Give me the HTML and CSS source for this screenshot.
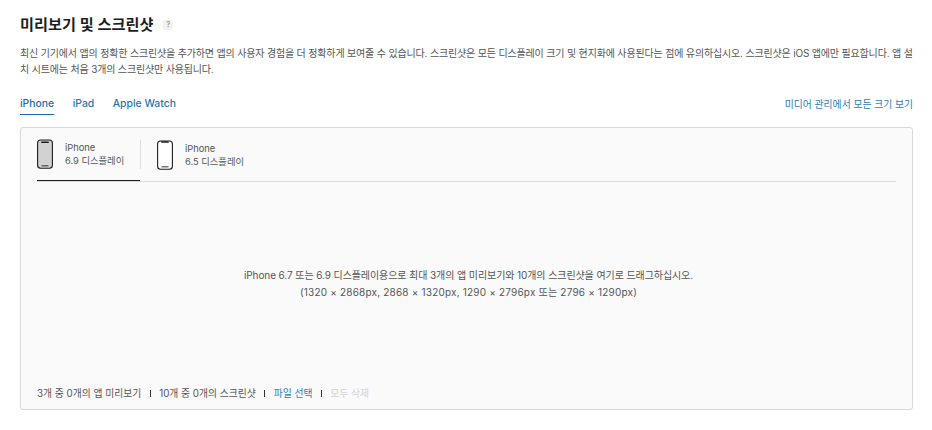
FILE: index.html
```html
<!DOCTYPE html>
<html lang="ko">
<head>
    <meta charset="UTF-8">
    <meta name="viewport" content="width=device-width, initial-scale=1.0">
    <title>미리보기 및 스크린샷</title>
    <link rel="stylesheet" href="styles.css">
</head>
<body>
    <div class="container">
        <div class="title-row">
            <h1>미리보기 및 스크린샷</h1>
            <span class="help">?</span>
        </div>
        <p class="intro">최신 기기에서 앱의 정확한 스크린샷을 추가하면 앱의 사용자 경험을 더 정확하게 보여줄 수 있습니다. 스크린샷은 모든 디스플레이 크기 및 현지화에 사용된다는 점에 유의하십시오. 스크린샷은 iOS 앱에만 필요합니다. 앱 설치 시트에는 처음 3개의 스크린샷만 사용됩니다.</p>

        <div class="tabs-row">
            <nav class="tabs">
                <a class="tab active">iPhone</a>
                <a class="tab">iPad</a>
                <a class="tab">Apple Watch</a>
            </nav>
            <a class="media-link">미디어 관리에서 모든 크기 보기</a>
        </div>

        <section class="panel">
            <div class="devices">
                <div class="device active">
                    <svg class="phone" width="16" height="30" viewBox="0 0 16 30">
                        <rect x="0.6" y="1" width="14.8" height="28.2" rx="3" fill="#d2d2d2" stroke="#1d1d1f" stroke-width="1.1"/>
                        <rect x="4" y="2.6" width="8" height="1.5" rx="0.75" fill="#1d1d1f"/>
                        <rect x="4.5" y="26.4" width="7" height="0.9" fill="#1d1d1f"/>
                    </svg>
                    <div class="device-text">
                        <span>iPhone</span>
                        <span>6.9 디스플레이</span>
                    </div>
                </div>
                <div class="device">
                    <svg class="phone" width="16" height="30" viewBox="0 0 16 30">
                        <rect x="0.6" y="1" width="14.8" height="28.2" rx="3" fill="#fff" stroke="#1d1d1f" stroke-width="1.1"/>
                        <rect x="4" y="1.2" width="8" height="1.5" rx="0.75" fill="#1d1d1f"/>
                        <rect x="4.5" y="26.4" width="7" height="0.9" fill="#1d1d1f"/>
                    </svg>
                    <div class="device-text">
                        <span>iPhone</span>
                        <span>6.5 디스플레이</span>
                    </div>
                </div>
            </div>

            <div class="drop-area">
                <p>iPhone 6.7 또는 6.9 디스플레이용으로 최대 3개의 앱 미리보기와 10개의 스크린샷을 여기로 드래그하십시오.</p>
                <p class="sizes">(1320 × 2868px, 2868 × 1320px, 1290 × 2796px 또는 2796 × 1290px)</p>
            </div>

            <div class="panel-footer">
                <span>3개 중 0개의 앱 미리보기</span>
                <span class="sep"></span>
                <span>10개 중 0개의 스크린샷</span>
                <span class="sep"></span>
                <a class="file-link">파일 선택</a>
                <span class="sep"></span>
                <span class="disabled">모두 삭제</span>
            </div>
        </section>
    </div>
</body>
</html>
```

FILE: styles.css
```css
body {
    font-family: Inter, "Noto Sans CJK KR", sans-serif;
    margin: 0;
    padding: 0;
    background: #fff;
    color: #333;
}
.container {
    height: 430px;
    box-sizing: border-box;
    padding: 15px 19px 20px 20px;
    display: flex;
    flex-direction: column;
    overflow: hidden;
}
.title-row {
    display: flex;
    align-items: center;
    gap: 10px;
    height: 19px;
}
h1 {
    font-size: 15.2px;
    font-weight: 600;
    line-height: 19px;
    margin: 0;
    color: #1d1d1f;
}
.help {
    width: 10px;
    height: 10px;
    border-radius: 3px;
    background: #f2f2f2;
    color: #777;
    font-size: 7px;
    line-height: 10px;
    text-align: center;
}
.intro {
    font-size: 10px;
    letter-spacing: -0.17px;
    line-height: 16px;
    margin: 11px 0 0;
    color: #555;
}
.tabs-row {
    display: flex;
    justify-content: space-between;
    align-items: flex-start;
    margin-top: 20px;
}
.tabs {
    display: flex;
    gap: 18.5px;
}
.tab {
    font-size: 10.4px;
    font-weight: 500;
    line-height: 14px;
    padding-bottom: 3px;
    color: #1f76b8;
}
.tab.active {
    color: #1a6fad;
    border-bottom: 1px solid #1a6fad;
}
.media-link {
    font-size: 9.8px;
    line-height: 14px;
    padding-top: 1px;
    color: #2c7cb8;
}
.panel {
    flex: 1;
    margin-top: 12px;
    border: 1px solid #d8d8d8;
    border-radius: 3px;
    background: #fafafa;
    display: flex;
    flex-direction: column;
    padding: 0 16px;
}
.devices {
    display: flex;
    border-bottom: 1px solid #d9d9d9;
    height: 53px;
}
.device {
    display: flex;
    align-items: center;
    gap: 12px;
    height: 53px;
    box-sizing: border-box;
    padding-right: 15px;
    font-size: 9.3px;
    color: #555;
    white-space: nowrap;
}
.device.active {
    width: 103px;
    border-bottom: 1px solid #1d1d1f;
}
.device + .device {
    padding-left: 17px;
    position: relative;
}
.device + .device::before {
    content: "";
    position: absolute;
    left: 0;
    top: 12px;
    height: 29px;
    width: 1px;
    background: #ddd;
}
.device-text {
    display: flex;
    flex-direction: column;
    line-height: 13px;
}
.drop-area {
    flex: 1;
    display: flex;
    flex-direction: column;
    justify-content: center;
    align-items: center;
    padding-left: 4px;
    font-size: 10px;
    letter-spacing: -0.095px;
    line-height: 17px;
    color: #555;
}
.drop-area p {
    margin: 0;
}
.drop-area .sizes {
    letter-spacing: 0.19px;
}
.panel-footer {
    display: flex;
    align-items: center;
    gap: 8.4px;
    height: 14px;
    margin-bottom: 9px;
    font-size: 9.8px;
    color: #555;
}
.sep {
    width: 1px;
    height: 7px;
    background: #333;
}
.file-link {
    color: #2c7cb8;
}
.disabled {
    color: #d4d4d4;
}
```
